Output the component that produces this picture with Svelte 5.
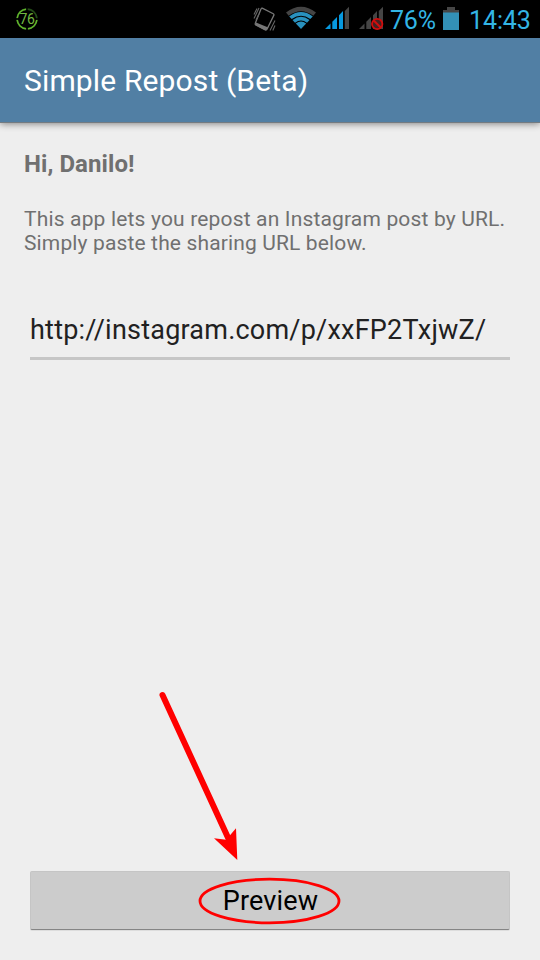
<script>
  const url = 'http://instagram.com/p/xxFP2TxjwZ/';
</script>

<div class="screen">
  <header class="status">
    <svg class="ring" width="24" height="24" viewBox="0 0 24 24">
      <circle cx="12" cy="12" r="9.9" fill="none" stroke="#234d18" stroke-width="1.6" />
      <path d="M21.8 13A9.9 9.9 0 0 1 13 21.8M11 21.8A9.9 9.9 0 0 1 2.2 13M2.2 11A9.9 9.9 0 0 1 11 2.2" fill="none" stroke="#62b42c" stroke-width="1.6" />
      <path d="M12 1v3M12 20v3M1 12h2.5M20.5 12h3" stroke="#000" stroke-width="1.4" />
      <text x="12" y="17" text-anchor="middle" font-size="14" letter-spacing="-.3" fill="#72b840">76</text>
    </svg>
    <svg class="vibrate" width="24" height="28" viewBox="0 0 24 28">
      <path d="M9.2 3.2 20.3 8.7Q21.3 9.3 20.8 10.4L14 24.2Q13.4 25.3 12.3 24.8L2.8 20Q1.8 19.4 2.3 18.3L8 4Q8.4 2.9 9.2 3.2Z" fill="none" stroke="#777" stroke-width="1.3" />
      <path d="M3 17.5 15.3 22.4 13.6 25 11.6 24.9 2.2 20Z" fill="#777" />
      <path d="M1 9.5 4 3.5M1 13.5 6 3M3 15 6 9M17 25.5 22 15.5M19.8 25.5 22 20.5" stroke="#666" stroke-width="1.1" />
    </svg>
    <svg class="wifi" width="32" height="24" viewBox="0 0 32 24">
      <path d="M1 6.5Q16-5 31 6.5L28.3 9.7Q16 .6 3.7 9.7Z" fill="#444" />
      <path d="M4.2 10.4Q16 1.5 27.8 10.4L25.3 13.1Q16 6.2 6.7 13.1ZM7.5 13.9Q16 7.5 24.5 13.9L22 16.8Q16 12.2 10 16.8ZM10.8 17.5Q16 13.3 21.2 17.5L16 23Z" fill="#2991be" />
    </svg>
    <svg class="signal" width="26" height="24" viewBox="0 0 26 24">
      <path d="M0 23 5.5 17.6V23ZM7.3 23V15.8L12 11V23ZM14 23V9.2L18 5V23Z" fill="#0799df" />
      <path d="M19.8 23V5L24 .7V23Z" fill="#454545" />
    </svg>
    <svg class="blocked" width="26" height="26" viewBox="0 0 26 26">
      <path d="M0 23 5.5 17.6V23ZM7.3 23V15.8L12 11V23ZM14 23V9.2L18 5V23ZM19.8 23V5L24 .7V23Z" fill="#454545" />
      <circle cx="18.2" cy="18" r="5.2" fill="#422" stroke="#d20d0d" stroke-width="1.8" />
      <path d="m14.5 14.3 7.4 7.4" stroke="#d20d0d" stroke-width="2" />
    </svg>
    <span class="percent">76%</span>
    <svg class="battery" width="16" height="24" viewBox="0 0 16 24">
      <path d="M4 0h8v3h4v3H0V3h4Z" fill="#464646" />
      <path d="M0 5.5h16V23H0Z" fill="#3391b7" />
    </svg>
    <span class="time">14:43</span>
  </header>
  <div class="appbar"><h1>Simple Repost (Beta)</h1></div>
  <main>
    <h2>Hi, Danilo!</h2>
    <p><span class="first">This app lets you repost an Instagram post by URL.</span><br /><span class="second">Simply paste the sharing URL below.</span></p>
    <div class="field"><span>{url}</span></div>
    <button><span>Preview</span></button>
  </main>
  <svg class="annotation" width="540" height="960" viewBox="0 0 540 960">
    <path d="M162.5 695 230 842" stroke="red" stroke-width="6" stroke-linecap="round" />
    <path d="M237.3 860 214 838.2 226.2 839.8 236 828.2Z" fill="red" />
    <ellipse cx="269.5" cy="901" rx="69.5" ry="21.8" fill="none" stroke="red" stroke-width="2.8" />
  </svg>
</div>

<style>
  .screen {
    position: relative;
    display: flex;
    flex-direction: column;
    width: 540px;
    height: 960px;
    overflow: hidden;
    background: #eee;
    font-family: Roboto, sans-serif;
  }
  .status {
    display: flex;
    align-items: flex-start;
    flex: none;
    height: 38px;
    background: #000;
    color: #33b5e5;
    font-size: 25px;
    line-height: 41px;
  }
  svg { flex: none; }
  .ring { margin: 7px 0 0 15px; }
  .vibrate { margin: 5px 0 0 214px; }
  .wifi { margin: 6px 0 0 8px; }
  .signal { margin: 6px 0 0 8px; }
  .blocked { margin: 6px 0 0 8px; }
  .percent { width: 53px; margin-left: 5px; letter-spacing: -.2px; white-space: nowrap; }
  .battery { margin-top: 7px; }
  .time { margin-left: 10px; letter-spacing: -.1px; white-space: nowrap; }
  .appbar {
    position: relative;
    display: flex;
    align-items: center;
    flex: none;
    height: 85px;
    box-sizing: border-box;
    padding-left: 24px;
    border-bottom: 1px solid #737b81;
    background: #517fa4;
    box-shadow: 0 1px 7px rgba(0, 0, 0, .45);
  }
  h1 { margin: 2px 0 0; color: #fff; font-size: 30px; font-weight: 400; line-height: 34px; letter-spacing: .14px; }
  main { display: flex; flex: 1; flex-direction: column; padding: 27px 30px 30px; }
  h2 { margin: 0 0 0 -6px; color: #707070; font-size: 24px; font-weight: 700; line-height: 28px; letter-spacing: .07px; }
  p { margin: 29px -6px 0; color: #707070; font-size: 21px; line-height: 24px; white-space: nowrap; }
  .first { letter-spacing: .165px; }
  .second { letter-spacing: .14px; }
  .field {
    box-sizing: border-box;
    height: 56px;
    margin-top: 49px;
    border-bottom: 3px solid #c6c6c6;
    color: #212121;
    font-size: 27px;
    line-height: 52px;
    letter-spacing: .22px;
  }
  button {
    height: 59px;
    margin-top: auto;
    padding: 1px 0 0 1px;
    border: 1px solid #c5c5c5;
    border-bottom-color: #858585;
    border-radius: 2px;
    background: #ccc;
    box-shadow: 0 1px 0 #ddd;
    color: #000;
    font: 27px/56px Roboto, sans-serif;
    letter-spacing: .15px;
  }
  .annotation { position: absolute; inset: 0; pointer-events: none; }
</style>
